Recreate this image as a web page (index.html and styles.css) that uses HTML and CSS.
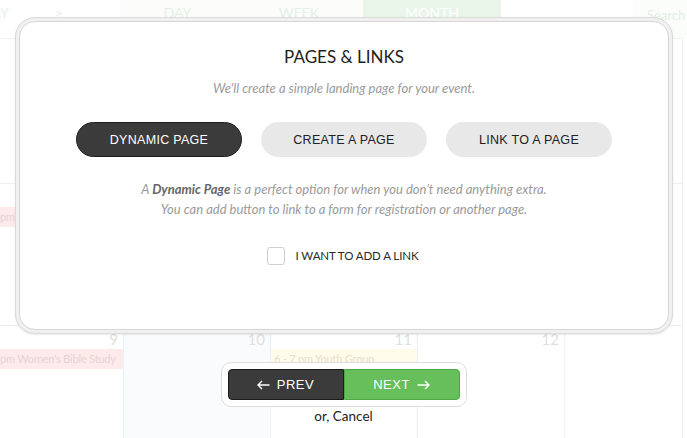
FILE: index.html
```html
<!DOCTYPE html>
<html>
<head>
<meta charset="utf-8">
<link rel="stylesheet" href="styles.css">
</head>
<body>
<div class="page">
  <div class="calendar">
    <div class="topbar">
      <div class="tb-left">
        <span class="today">TODAY</span>
        <span class="chev">&gt;</span>
      </div>
      <div class="tab tab-day">DAY</div>
      <div class="tab tab-week">WEEK</div>
      <div class="tab tab-month">MONTH</div>
      <div class="tb-spacer"></div>
      <div class="search">Search</div>
    </div>
    <div class="week">
      <div class="cell"><div class="num">25</div></div>
      <div class="cell"><div class="num">26</div></div>
      <div class="cell"><div class="num">27</div></div>
      <div class="cell"><div class="num">28</div></div>
      <div class="cell last"><div class="num"></div></div>
    </div>
    <div class="week">
      <div class="cell"><div class="num">2</div><div class="event pink">pm Women's Bible Study</div></div>
      <div class="cell"><div class="num">3</div></div>
      <div class="cell"><div class="num">4</div></div>
      <div class="cell"><div class="num">5</div></div>
      <div class="cell last"><div class="num"></div></div>
    </div>
    <div class="week tall">
      <div class="cell"><div class="num">9</div><div class="event pink">pm Women's Bible Study</div></div>
      <div class="cell today-col"><div class="num">10</div></div>
      <div class="cell"><div class="num">11</div><div class="event yellow">6 - 7 pm Youth Group</div></div>
      <div class="cell"><div class="num">12</div></div>
      <div class="cell last"><div class="num"></div></div>
    </div>
  </div>

  <div class="layer">
    <div class="modal">
      <div class="modal-inner">
        <h1 class="title">PAGES &amp; LINKS</h1>
        <p class="subtitle">We'll create a simple landing page for your event.</p>
        <div class="choices">
          <button class="choice active">DYNAMIC PAGE</button>
          <button class="choice">CREATE A PAGE</button>
          <button class="choice">LINK TO A PAGE</button>
        </div>
        <p class="desc">A <b>Dynamic Page</b> is a perfect option for when you don’t need anything extra.<br>You can add button to link to a form for registration or another page.</p>
        <label class="check">
          <span class="box"></span>
          <span class="check-label">I WANT TO ADD A LINK</span>
        </label>
      </div>
    </div>
    <div class="nav">
      <button class="navbtn prev">
        <svg class="arrow" width="13" height="10" viewBox="0 0 13 10"><path d="M12.5 5H1M5 1L1 5l4 4" fill="none" stroke="#fff" stroke-width="1.4"/></svg>
        PREV
      </button>
      <button class="navbtn next">
        NEXT
        <svg class="arrow" width="13" height="10" viewBox="0 0 13 10"><path d="M0.5 5H12M8 1l4 4-4 4" fill="none" stroke="#fff" stroke-width="1.4"/></svg>
      </button>
    </div>
    <div class="cancel">or, Cancel</div>
  </div>
</div>
</body>
</html>
```

FILE: styles.css
```css
* { box-sizing: border-box; }
html, body { margin: 0; padding: 0; }
body {
  width: 687px;
  height: 438px;
  overflow: hidden;
  background: #fff;
  font-family: Lato, "Open Sans", sans-serif;
}
.page { position: relative; width: 687px; height: 438px; overflow: hidden; }

/* ---------- faded calendar background ---------- */
.calendar { width: 683px; }
.topbar {
  display: flex;
  height: 39px;
  border-bottom: 1px solid #f0f0f0;
  font-size: 14px;
  line-height: 16px;
}
.tb-left {
  width: 120px;
  display: flex;
  align-items: flex-start;
  padding-top: 5px;
  color: #e6efe6;
}
.today { margin-left: -38px; }
.chev { margin-left: 46px; }
.tab {
  padding-top: 5px;
  text-align: center;
  color: #e4f0e4;
  height: 38px;
}
.tab-day { width: 115px; background: #fcfdfb; }
.tab-week { width: 128px; background: #fcfdfb; }
.tab-month { width: 138px; background: #e9f5e8; color: #fff; }
.tb-spacer { flex: 1; }
.search {
  width: 54px;
  margin-right: -4px;
  background: #fbfdfb;
  color: #e2efe2;
  padding: 7px 0 0 14px;
  height: 38px;
  font-size: 13px;
}

.week {
  display: grid;
  grid-template-columns: 123px 147px 147px 147px 119px;
  height: 145px;
  border-bottom: 1px solid #eeeeee;
  border-right: 1px solid #eeeeee;
}
.week + .week { height: 142px; }
.week.tall { height: 120px; border-bottom: 0; }
.cell { border-left: 1px solid #e6f2f9; position: relative; }
.cell:first-child { border-left: 0; }
.today-col { background: #f9fbfc; }
.num {
  text-align: right;
  padding: 4px 5px 0 0;
  height: 22px;
  line-height: 18px;
  font-size: 15px;
  color: #e0e0e0;
}
.event {
  margin-top: 1px;
  height: 20px;
  line-height: 20px;
  font-size: 11px;
  letter-spacing: -0.2px;
  white-space: nowrap;
  overflow: hidden;
  padding-left: 3px;
}
.event.pink { background: #fdeaea; color: #e6d4d4; padding-left: 0; }
.event.yellow { background: #fffbea; color: #e6e0cc; }

/* ---------- foreground layer ---------- */
.layer {
  position: absolute;
  inset: 0;
  display: flex;
  flex-direction: column;
  align-items: center;
  padding-top: 17px;
}
.modal {
  width: 658px;
  height: 317px;
  margin-left: 1px;
  border: 1px solid #dadada;
  border-radius: 20px;
  background: #f0f0f0;
  padding: 3px;
  box-shadow: 0 1px 2px rgba(0,0,0,0.08);
}
.modal-inner {
  height: 100%;
  border: 1px solid #d6d6d6;
  border-radius: 16px;
  background: #fff;
  display: flex;
  flex-direction: column;
  align-items: center;
  padding-top: 25px;
}
.title {
  margin: 0;
  font-size: 17px;
  line-height: 20px;
  font-weight: 400;
  color: #1e1e1e;
}
.subtitle {
  margin: 12px 0 0;
  font-size: 13px;
  line-height: 18px;
  font-style: italic;
  color: #9a9a9a;
}
.choices {
  display: flex;
  gap: 19px;
  margin-top: 25px;
}
.choice {
  width: 166px;
  height: 35px;
  border-radius: 18px;
  border: 1px solid #e8e8e8;
  background: #e8e8e8;
  color: #222;
  font-family: "Liberation Sans", Arial, sans-serif;
  font-size: 12.5px;
  letter-spacing: 0.3px;
  padding: 0;
}
.choice.active {
  background: #3b3b3b;
  border-color: #1e1e1e;
  color: #fff;
}
.desc {
  margin: 22px 0 0;
  text-align: center;
  font-size: 13px;
  line-height: 20px;
  font-style: italic;
  color: #9a9a9a;
}
.desc b { color: #666; font-weight: 700; }
.check {
  display: flex;
  align-items: center;
  gap: 11px;
  margin-top: 28px;
  margin-left: -3px;
}
.box {
  width: 18px;
  height: 18px;
  border: 1px solid #cfcfcf;
  border-radius: 3px;
  background: #fff;
}
.check-label {
  font-size: 11.5px;
  letter-spacing: -0.1px;
  line-height: 18px;
  color: #2a2a2a;
}

.nav {
  margin-top: 28px;
  display: flex;
  padding: 6px;
  border: 1px solid #dcdcdc;
  border-radius: 10px;
  background: #fff;
}
.navbtn {
  width: 116px;
  height: 31px;
  display: flex;
  align-items: center;
  justify-content: center;
  gap: 7px;
  color: #fff;
  font-family: "Liberation Sans", Arial, sans-serif;
  font-size: 13px;
  letter-spacing: 0.5px;
  padding: 0;
}
.navbtn.prev {
  background: #3b3b3b;
  border: 1px solid #1c1c1c;
  border-radius: 4px 0 0 4px;
}
.navbtn.next {
  background: #66bf5a;
  border: 1px solid #4ea845;
  border-radius: 0 4px 4px 0;
}
.cancel {
  margin-top: 0;
  font-size: 13.5px;
  line-height: 18px;
  color: #222;
}
```
